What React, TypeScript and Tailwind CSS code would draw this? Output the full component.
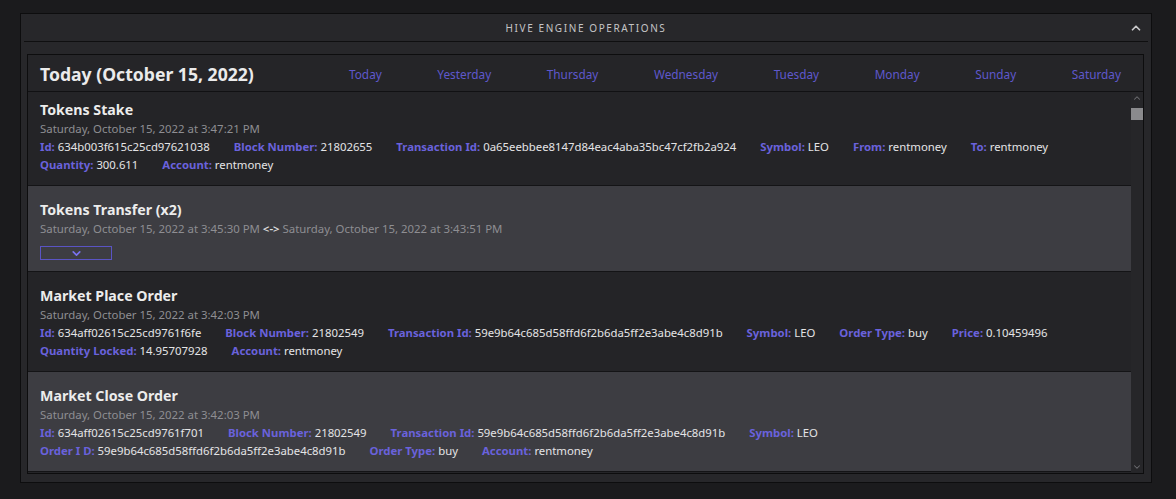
import { ChevronUp, ChevronDown } from 'lucide-react';

type Field = [string, string];

interface Op {
  title: string;
  date: string;
  date2?: string;
  lines?: Field[][];
  shade: boolean;
}

const ops: Op[] = [
  {
    title: 'Tokens Stake',
    date: 'Saturday, October 15, 2022 at 3:47:21 PM',
    shade: false,
    lines: [
      [
        ['Id:', '634b003f615c25cd97621038'],
        ['Block Number:', '21802655'],
        ['Transaction Id:', '0a65eebbee8147d84eac4aba35bc47cf2fb2a924'],
        ['Symbol:', 'LEO'],
        ['From:', 'rentmoney'],
        ['To:', 'rentmoney'],
      ],
      [
        ['Quantity:', '300.611'],
        ['Account:', 'rentmoney'],
      ],
    ],
  },
  {
    title: 'Tokens Transfer (x2)',
    date: 'Saturday, October 15, 2022 at 3:45:30 PM',
    date2: 'Saturday, October 15, 2022 at 3:43:51 PM',
    shade: true,
  },
  {
    title: 'Market Place Order',
    date: 'Saturday, October 15, 2022 at 3:42:03 PM',
    shade: false,
    lines: [
      [
        ['Id:', '634aff02615c25cd9761f6fe'],
        ['Block Number:', '21802549'],
        ['Transaction Id:', '59e9b64c685d58ffd6f2b6da5ff2e3abe4c8d91b'],
        ['Symbol:', 'LEO'],
        ['Order Type:', 'buy'],
        ['Price:', '0.10459496'],
      ],
      [
        ['Quantity Locked:', '14.95707928'],
        ['Account:', 'rentmoney'],
      ],
    ],
  },
  {
    title: 'Market Close Order',
    date: 'Saturday, October 15, 2022 at 3:42:03 PM',
    shade: true,
    lines: [
      [
        ['Id:', '634aff02615c25cd9761f701'],
        ['Block Number:', '21802549'],
        ['Transaction Id:', '59e9b64c685d58ffd6f2b6da5ff2e3abe4c8d91b'],
        ['Symbol:', 'LEO'],
      ],
      [
        ['Order I D:', '59e9b64c685d58ffd6f2b6da5ff2e3abe4c8d91b'],
        ['Order Type:', 'buy'],
        ['Account:', 'rentmoney'],
      ],
    ],
  },
];

const days = ['Today', 'Yesterday', 'Thursday', 'Wednesday', 'Tuesday', 'Monday', 'Sunday', 'Saturday'];

const OpRow = ({ op, first }: { op: Op; first: boolean }) => {
  return (
    <div
      className={`px-3 pt-[14px] pb-[11px] border-b border-[#141416] ${op.shade ? 'bg-[#3d3d42]' : 'bg-[#242427]'} ${first ? '-mt-[6px]' : ''}`}
    >
      <div className="h-5 leading-5 text-[14.2px] font-bold text-[#ececec]">{op.title}</div>
      <div className="h-[18px] leading-[18px] text-[11.4px] text-[#8e8e92]">
        {op.date}
        {op.date2 && (
          <>
            <span className="text-[#e0e0e0] font-semibold"> &lt;-&gt; </span>
            {op.date2}
          </>
        )}
      </div>
      {op.lines &&
        op.lines.map((line, i) => (
          <div key={i} className="flex gap-x-6 h-[18px] leading-[18px] text-[11.35px] whitespace-nowrap">
            {line.map(([k, v]) => (
              <span key={k}>
                <span className="font-bold text-[#6a62dc]">{k}</span>{' '}
                <span className="text-[#e4e4e6]">{v}</span>
              </span>
            ))}
          </div>
        ))}
      {!op.lines && (
        <div className="mt-2 w-[72px] h-[14px] border border-[#5a54c4] flex items-center justify-center">
          <ChevronDown size={13} strokeWidth={3} color="#7a72f0" />
        </div>
      )}
    </div>
  );
};

export default function App() {
  return (
    <div
      className="w-[1176px] h-[499px] bg-[#1b1b1d] pt-[13px] pl-5 overflow-hidden"
      style={{ fontFamily: '"Noto Sans", "Open Sans", sans-serif' }}
    >
      <div className="w-[1132px] h-[470px] bg-[#27272a] border border-[#0d0d0e] flex flex-col">
        <div className="mx-[3px] h-[28px] border-b border-[#0f0f10] relative flex items-center justify-center pt-[2px]">
          <span className="text-[10px] tracking-[0.16em] text-[#c4c4c6]">HIVE ENGINE OPERATIONS</span>
          <ChevronUp size={14} strokeWidth={3} color="#c8c8ca" className="absolute right-[5px] top-[7px]" />
        </div>
        <div className="mt-3 ml-[6px] w-[1117px] h-[420px] border border-[#0d0d0e] bg-[#252528] flex flex-col">
          <div className="h-[37px] border-b border-[#111113] flex items-center pl-3 pt-[3px]">
            <div className="text-[17.6px] font-bold text-[#ebebeb] leading-none">Today (October 15, 2022)</div>
            <div className="ml-auto mr-[22px] w-[772px] flex justify-between text-[11.8px] text-[#5f58cc]">
              {days.map((d) => (
                <span key={d}>{d}</span>
              ))}
            </div>
          </div>
          <div className="flex-1 flex min-h-0">
            <div className="flex-1 overflow-hidden">
              {ops.map((op, i) => (
                <OpRow key={op.title} op={op} first={i === 0} />
              ))}
            </div>
            <div className="w-3 bg-[#262629] relative">
              <ChevronUp size={10} strokeWidth={2.5} color="#6f6f73" className="absolute left-[1px] top-[1px]" />
              <div className="absolute left-0 top-[16px] w-3 h-3 bg-[#8a8a8d]" />
              <ChevronDown size={10} strokeWidth={2.5} color="#6f6f73" className="absolute left-[1px] bottom-[1px]" />
            </div>
          </div>
        </div>
      </div>
    </div>
  );
}
